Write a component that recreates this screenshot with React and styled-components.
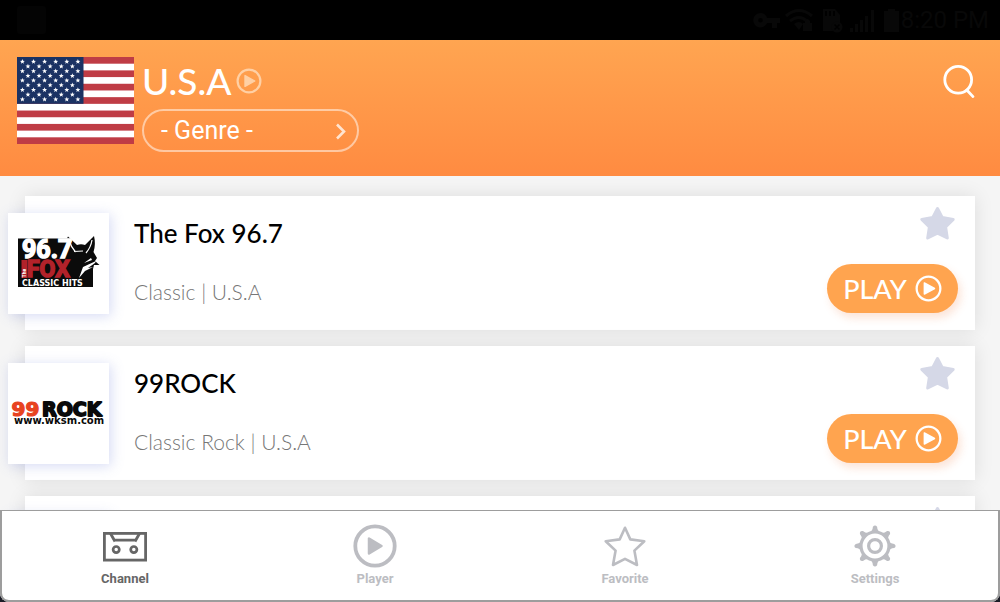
import React, { useState } from "react";
import styled, { createGlobalStyle } from "styled-components";

const GlobalStyle = createGlobalStyle`
  * {
    box-sizing: border-box;
  }
  body {
    margin: 0;
    background: #1b1c26;
    font-family: Lato, "Open Sans", sans-serif;
  }
  button,
  select {
    font-family: inherit;
    border: none;
    padding: 0;
    background: none;
    cursor: pointer;
  }
  svg {
    display: block;
    flex: none;
  }
`;

const Screen = styled.div`
  height: 100vh;
  display: flex;
  flex-direction: column;
  background: #1b1c26;
`;

const StatusBar = styled.div`
  flex: none;
  height: 40px;
  padding: 0 11px 0 17px;
  display: flex;
  align-items: center;
  justify-content: space-between;
  background: #000;
  color: #080808;
`;

const AppBadge = styled.div`
  width: 29px;
  height: 28px;
  border-radius: 3px;
  background: #040404;
`;

const StatusIcons = styled.div`
  display: flex;
  align-items: center;
  gap: 2px;
`;

const Clock = styled.span`
  font-family: Roboto, sans-serif;
  font-size: 24px;
  line-height: 40px;
`;

const Header = styled.header`
  flex: none;
  height: 136px;
  padding: 17px 23px 0 17px;
  display: flex;
  align-items: flex-start;
  gap: 8px;
  background: linear-gradient(#ffa551, #ff8b41);
`;

const Country = styled.div`
  flex: 1;
`;

const CountryRow = styled.div`
  height: 48px;
  margin-bottom: 4px;
  display: flex;
  align-items: center;
  gap: 5px;
`;

const CountryName = styled.h1`
  margin: 0;
  font-size: 37px;
  line-height: 48px;
  font-weight: 500;
  color: #fff;
`;

const GenreBox = styled.label`
  width: 217px;
  height: 43px;
  padding: 0 10px 0 17px;
  display: flex;
  align-items: center;
  border: 2px solid rgba(255, 255, 255, 0.5);
  border-radius: 22px;
`;

const GenreSelect = styled.select`
  flex: 1;
  min-width: 0;
  appearance: none;
  outline: none;
  color: #fff;
  font-family: Roboto, sans-serif;
  font-size: 25px;
  line-height: 32px;
`;

const IconButton = styled.button`
  display: flex;
  margin-top: ${(props) => props.$top || 0}px;
`;

const StationList = styled.ul`
  flex: 1;
  min-height: 0;
  margin: 0;
  padding: 20px 25px;
  display: flex;
  flex-direction: column;
  gap: 16px;
  overflow-y: auto;
  scrollbar-width: none;
  list-style: none;
  background: #f5f5f5;
`;

const Card = styled.li`
  flex: none;
  height: 134px;
  padding: 0 17px 0 0;
  display: flex;
  align-items: center;
  background: #fff;
  box-shadow: 0 0 18px rgba(0, 0, 0, 0.1);
`;

const LogoBox = styled.div`
  width: 101px;
  height: 101px;
  margin-left: -17px;
  display: flex;
  align-items: center;
  justify-content: center;
  background: #fff;
  box-shadow: 2px 2px 12px rgba(120, 135, 220, 0.3);
`;

const StationInfo = styled.div`
  flex: 1;
  padding: 0 0 2px 25px;
  display: flex;
  flex-direction: column;
  gap: 28px;
`;

const StationName = styled.h2`
  margin: 0;
  font-size: 26px;
  line-height: 32px;
  font-weight: 500;
  color: #000;
`;

const StationGenre = styled.p`
  margin: 0;
  font-size: 21px;
  line-height: 30px;
  font-weight: 300;
  color: #777;
`;

const Actions = styled.div`
  height: 134px;
  padding: 9px 0 17px;
  display: flex;
  flex-direction: column;
  align-items: flex-end;
  justify-content: space-between;
`;

const FavoriteButton = styled(IconButton)`
  margin-right: 2px;
`;

const PlayButton = styled.button`
  width: 131px;
  height: 49px;
  display: flex;
  align-items: center;
  justify-content: center;
  gap: 8px;
  border-radius: 25px;
  background: #ffa44f;
  box-shadow: 3px 5px 8px rgba(240, 120, 60, 0.2);
  color: #fff;
  font-size: 27px;
  line-height: 34px;
  font-weight: 500;
`;

const TabBar = styled.nav`
  flex: none;
  height: 92px;
  display: flex;
  background: #fff;
  box-shadow: inset 2px 0 #9d9d9d, inset -2px 0 #9d9d9d, inset 0 1px #9d9d9d,
    inset 0 -2px #9d9d9d;
  border-radius: 0 0 9px 9px;
`;

const Tab = styled.button`
  flex: 1;
  display: flex;
  flex-direction: column;
  align-items: center;
  padding-top: 14px;
  color: ${(props) => (props.$active ? "#666" : "#bcbdc2")};
`;

const TabLabel = styled.span`
  margin-top: 2px;
  font-family: Roboto, sans-serif;
  font-size: 13px;
  line-height: 18px;
  font-weight: 700;
`;

const starRows = [0, 1, 2, 3, 4, 5, 6, 7, 8];

const starPoints = (cx, cy, outer, inner) => {
  const points = [];
  for (let i = 0; i < 10; i++) {
    const r = i % 2 ? inner : outer;
    const a = (Math.PI / 5) * i - Math.PI / 2;
    points.push(`${(cx + r * Math.cos(a)).toFixed(2)},${(cy + r * Math.sin(a)).toFixed(2)}`);
  }
  return points.join(" ");
};

const Flag = () => (
  <svg width="117" height="87" viewBox="0 0 117 87" role="img" aria-label="U.S.A">
    <rect width="117" height="87" fill="#fff" />
    {[0, 1, 2, 3, 4, 5, 6].map((i) => (
      <rect key={i} y={(i * 2 * 87) / 13} width="117" height={87 / 13} fill="#bf3c45" />
    ))}
    <rect width="66.5" height="46.8" fill="#1b3263" />
    {starRows.map((row) =>
      Array.from({ length: row % 2 ? 5 : 6 }, (_, i) => (
        <polygon
          key={row + "_" + i}
          points={starPoints(5.4 + (row % 2 ? 5.55 : 0) + i * 11.1, 4.7 + row * 4.7, 2.6, 1.1)}
          fill="#fff"
        />
      ))
    )}
  </svg>
);

const PlayCircle = ({ size, stroke = 2, ...rest }) => (
  <svg width={size} height={size} viewBox="0 0 26 26" fill="none" {...rest}>
    <circle cx="13" cy="13" r={12.5 - stroke / 2} stroke="currentColor" strokeWidth={stroke} />
    <path
      d="M9 7.6v10.8l9.8-5.4z"
      fill="currentColor"
      stroke="currentColor"
      strokeWidth="1.4"
      strokeLinejoin="round"
    />
  </svg>
);

const SearchIcon = () => (
  <svg width="36" height="36" viewBox="0 0 36 36" fill="none" stroke="#fff" strokeWidth="2.8">
    <circle cx="17.2" cy="15.8" r="13.4" />
    <path d="M25.8 26l6.2 6.600" strokeLinecap="round" />
  </svg>
);

const Chevron = () => (
  <svg width="12" height="18" viewBox="0 0 12 18" fill="none">
    <path d="M2 2.500l7 7-7 7" stroke="#fff" strokeOpacity="0.75" strokeWidth="2.6" />
  </svg>
);

const FavoriteStar = () => (
  <svg width="37" height="36" viewBox="0 0 37 36">
    <polygon
      points="18.5,3.5 23.3,12.6 34.2,14.4 26.6,22 28.3,33 18.5,28.2 8.7,33 10.4,22 2.8,14.4 13.7,12.6"
      fill="#d5d8e7"
      stroke="#d5d8e7"
      strokeWidth="3"
      strokeLinejoin="round"
    />
  </svg>
);

const FoxLogo = () => (
  <svg width="84" height="54" viewBox="0 0 84 54" role="img" aria-label="96.7 The Fox">
    <path
      d="M1 2.500H50L51 .5 60 9Q64 7.5 68 9L77 0Q79 8 76.500 16L80 22 78 25 82.500 29 77 29 76 33V51H1z"
      fill="#0b0b0b"
    />
    <path d="M52 4Q54 11 58.500 16M57 15.500l9-.5M75 4Q74 11 69 17" fill="none" stroke="#fff" strokeWidth="1.200" />
    <path d="M74 22l-7 5 8-3zM79 25L66 31l-4 11 6-7 8-4-5 1 7-5zM72 24l-6 3" fill="#fff" />
    <g fontFamily="Liberation Sans Narrow, Roboto, sans-serif" fontWeight="700">
      <text x="5" y="21.500" fontSize="25" fill="#fff" stroke="#fff" strokeWidth="1.500">
        96.7
      </text>
      <text x="10" y="41" fontSize="23" fill="#b3222a" stroke="#b3222a" strokeWidth="1.500">
        FOX
      </text>
    </g>
    <rect x="4.500" y="24" width="6" height="18" fill="#b3222a" />
    <text
      transform="translate(9 41.500) rotate(-90)"
      fontFamily="Roboto, sans-serif"
      fontWeight="900"
      fontSize="5"
      fill="#fff"
    >
      The
    </text>
    <text x="5" y="49.500" fontFamily="DejaVu Sans, sans-serif" fontWeight="700" fontSize="8" fill="#fff">
      CLASSIC HITS
    </text>
  </svg>
);

const RockLogo = () => (
  <svg width="97" height="30" viewBox="0 0 97 30" role="img" aria-label="99ROCK">
    <g fontFamily="DejaVu Sans, sans-serif" fontWeight="700" strokeLinejoin="round">
      <text x="1.500" y="17.500" fontSize="20" fill="#e8431f" stroke="#e8431f" strokeWidth="1.200">
        99
      </text>
      <text x="32" y="17.500" fontSize="19" fill="#0a0a0a" stroke="#0a0a0a" strokeWidth="1.800">
        ROCK
      </text>
      <text x="4" y="26" fontSize="10" fill="#0a0a0a">
        www.wksm.com
      </text>
    </g>
  </svg>
);

const ChannelIcon = () => (
  <svg width="44" height="44" viewBox="0 0 44 44" fill="none" stroke="currentColor" strokeWidth="2.800">
    <rect x="1.400" y="9.400" width="41.200" height="26.700" />
    <path d="M7.500 9.500l4.500 8M36.500 9.500L32 17.500M10.500 16.200h23" />
    <circle cx="13.200" cy="25.600" r="3.100" strokeWidth="2.700" />
    <circle cx="30.800" cy="25.600" r="3.100" strokeWidth="2.700" />
  </svg>
);

const PlayerIcon = () => (
  <svg width="44" height="44" viewBox="0 0 44 44" fill="none">
    <circle cx="22" cy="22" r="19.700" stroke="currentColor" strokeWidth="3.800" />
    <path
      d="M16 14.500v15L28.500 22z"
      fill="currentColor"
      stroke="currentColor"
      strokeWidth="2.500"
      strokeLinejoin="round"
    />
  </svg>
);

const StarIcon = () => (
  <svg width="44" height="44" viewBox="0 0 44 44" fill="none">
    <polygon
      points="22,3.800 27.300,15.400 41.300,17.200 31.400,26.600 34,41 22,34.900 10,41 12.600,26.600 2.700,17.200 16.700,15.400"
      stroke="currentColor"
      strokeWidth="2.600"
      strokeLinejoin="round"
    />
  </svg>
);

const GearIcon = () => (
  <svg width="44" height="44" viewBox="0 0 44 44" fill="none">
    {[0, 45, 90, 135, 180, 225, 270, 315].map((angle) => (
      <path
        key={angle}
        d="M16.800 8.500Q19.600 7 19.900 2.800Q22 0 24.100 2.800Q24.400 7 27.200 8.500z"
        fill="currentColor"
        transform={`rotate(${angle} 22 22)`}
      />
    ))}
    <circle cx="22" cy="22" r="14" stroke="currentColor" strokeWidth="3.200" />
    <circle cx="22" cy="22" r="6.400" stroke="currentColor" strokeWidth="3.200" />
  </svg>
);

const StatusGlyphs = () => (
  <svg width="146" height="28" viewBox="0 0 146 28" fill="currentColor">
    <path
      fillRule="evenodd"
      d="M7.500 7a7.200 7.200 0 1 0 6.600 10H19v5h5v-5h3v-5H14.100A7.200 7.200 0 0 0 7.500 7zm0 5a2.300 2.300 0 1 1 0 4.600 2.300 2.300 0 0 1 0-4.600z"
    />
    <g fill="none" stroke="currentColor" strokeWidth="3">
      <path d="M33 10Q46 -1 59 10M37 15q9-7 17 0" />
    </g>
    <path d="M41 18q5-4 9 0l-4 6zM50 17h9v8h-9zM52 17v-2q2-4 5 0v2z" />
    <path
      fillRule="evenodd"
      d="M70 3h12l5 6v9l-5 7H70zm2 2v5h2V5zm4 0v5h2V5zm4 0v5h2V5z"
    />
    <circle cx="84" cy="21" r="5.500" />
    <path d="M81.500 18.500l5 5m0-5l-5 5" stroke="#000" strokeWidth="1.500" />
    <path d="M97 22h3v4h-3zM102 18h3v8h-3zM107 14h3v12h-3zM112 10h3v16h-3zM118 4h3v22h-3zM131 5h4V3h7v2h4v21h-15z" />
  </svg>
);

const stations = [
  { name: "The Fox 96.7", genre: "Classic", country: "U.S.A", logo: <FoxLogo /> },
  { name: "99ROCK", genre: "Classic Rock", country: "U.S.A", logo: <RockLogo /> },
  { loading: true },
];

const tabs = [
  { label: "Channel", icon: <ChannelIcon /> },
  { label: "Player", icon: <PlayerIcon /> },
  { label: "Favorite", icon: <StarIcon /> },
  { label: "Settings", icon: <GearIcon /> },
];

const Station = ({ station }) => (
  <Card>
    <LogoBox>{station.logo}</LogoBox>
    <StationInfo>
      {station.loading ? null : (
        <>
          <StationName>{station.name}</StationName>
          <StationGenre>
            {station.genre} | {station.country}
          </StationGenre>
        </>
      )}
    </StationInfo>
    <Actions>
      <FavoriteButton aria-label="Favorite">
        <FavoriteStar />
      </FavoriteButton>
      {station.loading ? null : (
        <PlayButton>
          PLAY
          <PlayCircle size={27} stroke={2.2} />
        </PlayButton>
      )}
    </Actions>
  </Card>
);

export default function App() {
  const [activeTab, setActiveTab] = useState("Channel");

  return (
    <Screen>
      <GlobalStyle />
      <StatusBar>
        <AppBadge />
        <StatusIcons>
          <StatusGlyphs />
          <Clock>8:20 PM</Clock>
        </StatusIcons>
      </StatusBar>
      <Header>
        <Flag />
        <Country>
          <CountryRow>
            <CountryName>U.S.A</CountryName>
            <IconButton aria-label="Play country">
              <PlayCircle size={26} stroke={2.2} color="#ffd0a5" />
            </IconButton>
          </CountryRow>
          <GenreBox>
            <GenreSelect aria-label="Genre">
              <option>- Genre -</option>
            </GenreSelect>
            <Chevron />
          </GenreBox>
        </Country>
        <IconButton $top={7} aria-label="Search">
          <SearchIcon />
        </IconButton>
      </Header>
      <StationList>
        {stations.map((station, index) => (
          <Station key={"station_" + index} station={station} />
        ))}
      </StationList>
      <TabBar>
        {tabs.map((tab) => (
          <Tab
            key={tab.label}
            $active={tab.label === activeTab}
            onClick={() => setActiveTab(tab.label)}
          >
            {tab.icon}
            <TabLabel>{tab.label}</TabLabel>
          </Tab>
        ))}
      </TabBar>
    </Screen>
  );
}
